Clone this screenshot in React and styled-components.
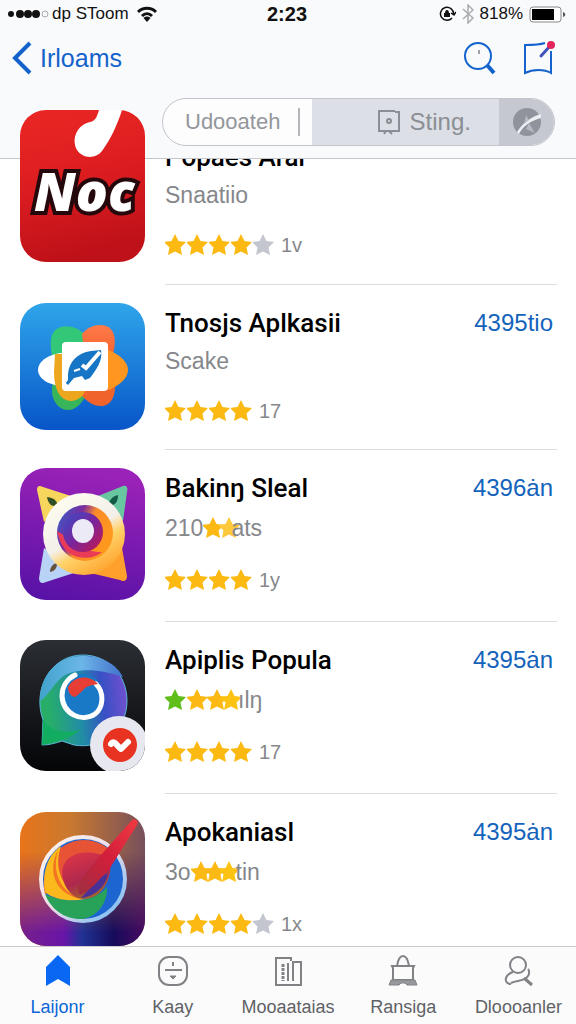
import React, { useState } from "react";
import styled, { createGlobalStyle, css } from "styled-components";

const Global = createGlobalStyle`
  * {
    box-sizing: border-box;
  }
  body {
    margin: 0;
    background: #fff;
    font-family: "Liberation Sans", Arial, sans-serif;
  }
  button {
    padding: 0;
    border: 0;
    background: none;
    font: inherit;
    color: inherit;
    cursor: pointer;
  }
  svg {
    display: block;
    flex: none;
  }
`;

const Page = styled.div`
  display: flex;
  flex-direction: column;
  min-height: 100vh;
`;

const Header = styled.header`
  position: sticky;
  top: 0;
  z-index: 1;
  height: 159px;
  background: #f9fafc;
  border-bottom: 1px solid #c4c5c9;
`;

const StatusBar = styled.div`
  display: grid;
  grid-template-columns: 1fr auto 1fr;
  align-items: center;
  height: 28px;
  padding: 0 10px 0 8px;
  font-size: 17px;
  color: #111;
`;

const StatusGroup = styled.div`
  display: flex;
  align-items: center;
  justify-content: ${(props) => (props.$end ? "flex-end" : "flex-start")};
  gap: ${(props) => (props.$end ? 6 : 2)}px;
`;

const Carrier = styled.span`
  margin-right: 6px;
`;

const Time = styled.span`
  font-size: 20px;
  font-weight: bold;
`;

const NavBar = styled.nav`
  display: flex;
  align-items: center;
  justify-content: space-between;
  height: 60px;
  padding: 0 20px 0 12px;
  color: #1463cc;
`;

const BackButton = styled.button`
  display: flex;
  align-items: center;
  gap: 8px;
  && {
    font-size: 25px;
  }
`;

const NavActions = styled.div`
  display: flex;
  gap: 24px;
`;

const SearchBar = styled.form`
  display: grid;
  grid-template-columns: 150fr 188fr 55fr;
  height: 48px;
  margin: 10px 21px 0 162px;
  overflow: hidden;
  border: 1px solid #c3c5cb;
  border-radius: 24px;
  background: #fdfdfe;
  color: #8b8e94;
  font-size: 24px;
`;

const SearchField = styled.div`
  display: flex;
  align-items: center;
  padding: 0 12px 0 22px;
`;

const SearchInput = styled.input`
  width: 100%;
  height: 28px;
  padding: 0;
  border: 0;
  border-right: 2px solid #b4b6bb;
  outline: none;
  background: none;
  color: #94969b;
  font: inherit;
  font-size: 22px;
`;

const Scope = styled.button`
  display: flex;
  align-items: center;
  justify-content: center;
  gap: 9px;
  && {
    padding-left: 36px;
    background: #dcdfe5;
  }
`;

const ClearButton = styled.button`
  display: flex;
  align-items: center;
  justify-content: center;
  && {
    background: #c5c8d0;
  }
`;

const List = styled.ul`
  flex: 1;
  margin: -67px 0 0;
  padding: 0;
  list-style: none;
`;

const Row = styled.li`
  display: grid;
  grid-template-columns: 125px 1fr;
  column-gap: 20px;
  padding: 0 19px 0 20px;
`;

const AppIcon = styled.div`
  position: relative;
  z-index: ${(props) => (props.$raised ? 2 : 0)};
  height: ${(props) => props.$height}px;
  margin-top: 18px;
  overflow: hidden;
  border-radius: 26px;
`;

const Info = styled.div`
  padding: 18px 0 29px;
  border-bottom: 1px solid #dcdcde;
  ${(props) =>
    props.$compact &&
    css`
      padding-bottom: 26px;
    `}
  ${(props) =>
    props.$under &&
    css`
      padding: 45px 0 27px;
    `}
  ${(props) =>
    props.$last &&
    css`
      padding-bottom: 0;
      border: 0;
    `}
`;

const TitleLine = styled.div`
  display: flex;
  justify-content: space-between;
  height: 40px;
  padding-right: 4px;
  line-height: 40px;
`;

const Title = styled.h2`
  margin: 0;
  color: #000;
  font-family: Roboto, sans-serif;
  font-size: 26px;
  font-weight: 500;
`;

const Price = styled.a`
  color: #1463bb;
  font-size: 24px;
  text-decoration: none;
`;

const Subtitle = styled.div`
  display: flex;
  align-items: center;
  height: ${(props) => (props.$compact ? 36 : 40)}px;
  color: #85878b;
  font-size: 23px;
`;

const Rating = styled.div`
  display: flex;
  align-items: center;
  height: 24px;
  margin-top: 20px;
  color: #85878b;
  font-size: 20px;
`;

const Count = styled.span`
  margin-left: 6px;
`;

const StarBox = styled.span`
  width: ${(props) => props.$width}px;
`;

const TabBar = styled.nav`
  position: sticky;
  bottom: 0;
  z-index: 1;
  display: flex;
  height: 78px;
  border-top: 1px solid #cbcbcd;
  background: #fbfbfc;
`;

const Tab = styled.button`
  display: flex;
  flex: 1 1 0;
  min-width: 0;
  flex-direction: column;
  align-items: center;
  gap: 7px;
  && {
    padding-top: 7px;
    color: ${(props) => (props.$active ? "#0a66d8" : "#606266")};
    font-size: 18px;
    line-height: 24px;
  }
`;

const Star = ({ color = "#fbb911", width = 22 }) => (
  <StarBox $width={width}>
    <svg width="22" height="24" viewBox="0 0 22 24">
      <path
        d="M10 1l3.500 7 7.500 1-5.500 5.500L17 22l-7-3.500L3 22l1.500-7.500L-1 9l7.500-1z"
        fill={color}
      />
    </svg>
  </StarBox>
);

const NocArt = () => (
  <svg width="125" height="152" viewBox="0 0 125 152">
    <defs>
      <linearGradient id="noc" x1="0" y1="0" x2="0.2" y2="1">
        <stop offset="0" stopColor="#ea2724" />
        <stop offset="0.5" stopColor="#dc1d20" />
        <stop offset="1" stopColor="#bf1119" />
      </linearGradient>
    </defs>
    <rect width="125" height="152" fill="url(#noc)" />
    <path
      d="M79 0h23C97 16 90 30 82 41c-7 9-20 7-25-1-6-11 0-25 13-28 6-1 7-6 9-12z"
      fill="#fff"
    />
    <text
      x="14"
      y="101"
      fontFamily="Open Sans, sans-serif"
      fontSize="53"
      fontWeight="800"
      fontStyle="italic"
      fill="#fff"
      stroke="#24080b"
      strokeWidth="8"
      strokeLinejoin="miter"
      paintOrder="stroke"
    >
      Noc
    </text>
  </svg>
);

const FeatherArt = () => (
  <svg width="125" height="127" viewBox="0 0 125 127">
    <defs>
      <linearGradient id="sky" x1="0" y1="0" x2="0" y2="1">
        <stop offset="0" stopColor="#2fa5ea" />
        <stop offset="1" stopColor="#0855c8" />
      </linearGradient>
      <linearGradient id="orange" x1="0" y1="0" x2="0" y2="1">
        <stop offset="0" stopColor="#ff7a4a" />
        <stop offset="1" stopColor="#ef5a22" />
      </linearGradient>
    </defs>
    <rect width="125" height="127" fill="url(#sky)" />
    <path d="M64 31C54 20 33 20 31 36c-1 10 1 20 6 30l27-14z" fill="#33c878" />
    <path d="M33 80c-4 14 4 27 15 27 9 0 15-8 21-20L50 72z" fill="#38b45a" />
    <path d="M62 31c9-11 28-13 32 1 2 9 0 17-4 27L66 66z" fill="url(#orange)" />
    <path d="M94 76c3 13-1 25-11 27-10 1-19-6-25-16l16-20z" fill="#f0642c" />
    <path d="M88 47c9 3 20 11 20 20s-11 17-20 20z" fill="#ff961f" />
    <path d="M44 50c-14 0-26 8-26 17s12 16 26 16z" fill="#fff" />
    <path d="M35 51h12v37h18c-3 8-12 12-19 9-9-4-12-16-12-28z" fill="#eda71e" />
    <rect x="42" y="39" width="46" height="49" rx="4" fill="#fff" />
    <path
      d="M48 71c1-12 9-21 23-23l10-1c2 11-5 20-11 28l-5 2-3-4-8 2-6 6z"
      fill="#1676c5"
    />
    <path d="M62 62l4 3 14-16" fill="none" stroke="#fff" strokeWidth="4" />
    <path d="M47 81l9-12" stroke="#1676c5" strokeWidth="3" />
    <path d="M54 68l6-2" stroke="#fff" strokeWidth="2" />
  </svg>
);

const EyeArt = () => (
  <svg width="125" height="132" viewBox="0 0 125 132">
    <defs>
      <linearGradient id="violet" x1="0.5" y1="0" x2="0.3" y2="1">
        <stop offset="0" stopColor="#9b22b8" />
        <stop offset="1" stopColor="#5912a6" />
      </linearGradient>
      <linearGradient id="shell" x1="0.2" y1="0" x2="0.8" y2="1">
        <stop offset="0" stopColor="#fffdf0" />
        <stop offset="0.5" stopColor="#f3efe9" />
        <stop offset="0.65" stopColor="#ffd268" />
        <stop offset="1" stopColor="#ff9c25" />
      </linearGradient>
      <linearGradient id="iris" x1="0" y1="0" x2="1" y2="0.5">
        <stop offset="0" stopColor="#2667d5" />
        <stop offset="0.4" stopColor="#7c2b9c" />
        <stop offset="0.6" stopColor="#fb8b2b" />
        <stop offset="1" stopColor="#ff991d" />
      </linearGradient>
      <linearGradient id="pupil" x1="0" y1="0" x2="1" y2="1">
        <stop offset="0" stopColor="#3451ca" />
        <stop offset="0.5" stopColor="#7a249c" />
        <stop offset="1" stopColor="#c51848" />
      </linearGradient>
    </defs>
    <rect width="125" height="132" fill="url(#violet)" />
    <path d="M17 22c0-4 2-5 6-3l28 9-27 26z" fill="#f7d65d" />
    <path d="M78 28l25-10c4-1 5 2 4 6l-4 29z" fill="#68c6a0" />
    <path d="M24 80l-5 30c0 5 3 6 7 4l34-11z" fill="#b8d3f5" />
    <path d="M102 80l5 28c0 5-3 6-7 4l-34-8z" fill="#ffa02d" />
    <path d="M27 29c8 1 11 5 10 9-6 1-9-3-10-9z" fill="#314f24" />
    <path d="M98 27c-7 2-9 6-10 11 7 0 10-4 10-11z" fill="#125b46" />
    <path d="M37 95c-5 1-7 5-7 9 5-1 7-4 7-9z" fill="#66503e" />
    <circle cx="64" cy="66" r="41" fill="url(#shell)" />
    <circle cx="65" cy="65" r="28" fill="url(#iris)" />
    <path d="M37 63c3 15 10 23 21 26 10 2 18 0 24-5-10 0-19-2-27-10z" fill="#e93a58" />
    <circle cx="63" cy="64" r="20" fill="url(#pupil)" />
    <ellipse cx="63" cy="63" rx="11" ry="12" fill="#eceaf7" />
  </svg>
);

const BubbleArt = () => (
  <svg width="125" height="132" viewBox="0 0 125 132">
    <defs>
      <linearGradient id="night" x1="0" y1="0" x2="0" y2="1">
        <stop offset="0" stopColor="#2b2e34" />
        <stop offset="1" stopColor="#040507" />
      </linearGradient>
      <linearGradient id="bubble" x1="0.1" y1="0.6" x2="1" y2="0.5">
        <stop offset="0" stopColor="#28ae69" />
        <stop offset="0.4" stopColor="#218ca6" />
        <stop offset="0.7" stopColor="#3750c4" />
        <stop offset="1" stopColor="#7150cf" />
      </linearGradient>
      <linearGradient id="glass" x1="0" y1="0" x2="1" y2="0">
        <stop offset="0" stopColor="#41a3cb" />
        <stop offset="0.5" stopColor="#6bb6e8" />
        <stop offset="1" stopColor="#4270c9" />
      </linearGradient>
    </defs>
    <rect width="125" height="132" fill="url(#night)" />
    <path
      d="M63 15c25 0 44 20 44 46 0 28-24 49-53 44l-12-4c-6 2-13 4-20 4l1-25c-11-31 8-65 40-65z"
      fill="url(#bubble)"
      stroke="#5db6dc"
      strokeWidth="1"
    />
    <path d="M20 61c0-27 18-45 43-45 20 0 34 9 40 21C78 28 54 28 42 37c-10 9-14 19-22 24z" fill="url(#glass)" />
    <path d="M22 105l1-26c7 12 20 15 38 11-12 8-25 13-39 15z" fill="#12ad60" />
    <circle cx="62" cy="55" r="21" fill="#1979c7" />
    <path
      d="M76 44c9 9 7 24-1 30-13 9-32 0-33-18 0-9 5-17 13-21"
      fill="none"
      stroke="#fff"
      strokeWidth="5"
      strokeLinecap="round"
    />
    <path d="M48 47c7-12 22-12 30-3-8 1-12 3-14 5-4 4-6 6-9 8-5-1-7-5-7-10z" fill="#e63e35" />
    <circle cx="99" cy="105" r="29" fill="#e6e7ef" />
    <circle cx="100" cy="105" r="17" fill="#e83322" />
    <path
      d="M91 104c3-5 6 2 10 5l7-7"
      fill="none"
      stroke="#fff"
      strokeWidth="6"
      strokeLinecap="round"
      strokeLinejoin="round"
    />
  </svg>
);

const PaletteArt = () => (
  <svg width="125" height="134" viewBox="0 0 125 134">
    <defs>
      <linearGradient id="dusk" x1="0" y1="0" x2="1" y2="0">
        <stop offset="0" stopColor="#e8741a" />
        <stop offset="0.4" stopColor="#c9792f" />
        <stop offset="1" stopColor="#76505d" />
      </linearGradient>
      <linearGradient id="deep" x1="0" y1="0" x2="1" y2="0">
        <stop offset="0" stopColor="#75208b" />
        <stop offset="0.35" stopColor="#6915a8" />
        <stop offset="0.5" stopColor="#203293" />
        <stop offset="0.75" stopColor="#160b5b" />
        <stop offset="1" stopColor="#470960" />
      </linearGradient>
      <linearGradient id="fade" x1="0" y1="0" x2="0" y2="1">
        <stop offset="0.3" stopColor="#000" />
        <stop offset="0.9" stopColor="#fff" />
      </linearGradient>
      <mask id="lower">
        <rect width="125" height="134" fill="url(#fade)" />
      </mask>
      <linearGradient id="ring" x1="0" y1="0" x2="1" y2="1">
        <stop offset="0" stopColor="#fff5ec" />
        <stop offset="0.5" stopColor="#eadde8" />
        <stop offset="1" stopColor="#6ab8f5" />
      </linearGradient>
      <linearGradient id="heart" x1="0.2" y1="0" x2="0.6" y2="1">
        <stop offset="0" stopColor="#dc3547" />
        <stop offset="0.6" stopColor="#ae284e" />
        <stop offset="1" stopColor="#a36a26" />
      </linearGradient>
      <linearGradient id="brush" x1="1" y1="0" x2="0" y2="1">
        <stop offset="0" stopColor="#f03a41" />
        <stop offset="0.5" stopColor="#d31e3c" />
        <stop offset="1" stopColor="#9e3040" />
      </linearGradient>
    </defs>
    <rect width="125" height="134" fill="url(#dusk)" />
    <rect width="125" height="134" fill="url(#deep)" mask="url(#lower)" />
    <circle cx="63" cy="67" r="42" fill="#1d66d2" stroke="url(#ring)" strokeWidth="4" />
    <path d="M25 82c-6-26 11-53 38-54 16 0 25 7 31 15L62 67z" fill="#e65335" />
    <path d="M25 82c12 6 28 8 42 5 8-2 15-6 20-12 1 14-8 29-24 32-17 1-32-9-38-25z" fill="#27a258" />
    <path d="M25 80c-3-21 3-37 16-46-8 24 2 44 24 53-14 3-31 1-40-7z" fill="#fcb91d" />
    <path d="M38 38c-7 24 4 44 25 49-26-3-37-26-25-49z" fill="#f47423" />
    <path d="M45 73c-9-21 5-35 28-32l17 3c3 15-3 42-26 43-9 0-15-6-19-14z" fill="url(#heart)" />
    <path d="M61 86c9-1 24-7 27-25l-9 5z" fill="#493196" />
    <path d="M112 8c4-2 7 1 5 5L90 56C79 68 69 80 60 83c-4-6 0-14 6-22 5-6 9-11 15-18z" fill="url(#brush)" />
  </svg>
);

const apps = [
  {
    title: "Popaes Arar",
    subtitle: ["Snaatiio"],
    rating: 4,
    gray: true,
    count: "1v",
    height: 152,
    under: true,
    compact: true,
    Art: NocArt,
  },
  {
    title: "Tnosjs Aplkasii",
    subtitle: ["Scake"],
    price: "4395tio",
    rating: 4,
    count: "17",
    height: 127,
    compact: true,
    Art: FeatherArt,
  },
  {
    title: "Bakinŋ Sleal",
    subtitle: ["210", ["#fdb913", 16], ["#fdc93c", 12], "ats"],
    price: "4396ȧn",
    rating: 4,
    count: "1y",
    height: 132,
    Art: EyeArt,
  },
  {
    title: "Apiplis Popula",
    subtitle: [["#5fbe18", 22], ["#fdb913", 20], ["#fdb913", 14], ["#fdc313", 17], "ılŋ"],
    price: "4395ȧn",
    rating: 4,
    count: "17",
    height: 131,
    Art: BubbleArt,
  },
  {
    title: "Apokaniasl",
    subtitle: ["3o", ["#fdb913", 14], ["#fdb913", 14], ["#fdc313", 17], "tin"],
    price: "4395ȧn",
    rating: 4,
    gray: true,
    count: "1x",
    height: 134,
    last: true,
    Art: PaletteArt,
  },
];

const AppRow = ({ app }) => {
  const { Art } = app;
  return (
    <Row>
      <AppIcon $height={app.height} $raised={app.under}>
        <Art />
      </AppIcon>
      <Info $compact={app.compact} $under={app.under} $last={app.last}>
        <TitleLine>
          <Title>{app.title}</Title>
          {app.price && <Price href="#app">{app.price}</Price>}
        </TitleLine>
        <Subtitle $compact={app.compact}>
          {app.subtitle.map((part, i) =>
            typeof part === "string" ? (
              <span key={i}>{part}</span>
            ) : (
              <Star key={i} color={part[0]} width={part[1]} />
            )
          )}
        </Subtitle>
        <Rating>
          {Array.from({ length: app.rating }, (_, i) => (
            <Star key={i} />
          ))}
          {app.gray && <Star color="#c3c6cf" />}
          <Count>{app.count}</Count>
        </Rating>
      </Info>
    </Row>
  );
};

const tabs = [
  {
    label: "Laijonr",
    icon: <path d="M16 1l12 12v19l-12-7-12 7V13z" fill="#0868f4" />,
  },
  {
    label: "Kaay",
    icon: (
      <g fill="none" stroke="#808286" strokeWidth="2">
        <rect x="2" y="3" width="28" height="28" rx="10" />
        <path d="M8 16h17M16 8v4" />
        <path d="M13 22l3 3 3-3z" fill="#808286" strokeWidth="1" />
      </g>
    ),
  },
  {
    label: "Mooaataias",
    icon: (
      <g fill="none" stroke="#808286" strokeWidth="2">
        <path d="M19 4H4v27h25V8h-8v19M19 3v4M16 9v18" />
        <path d="M11 10v17" strokeWidth="3" strokeDasharray="3 1" />
      </g>
    ),
  },
  {
    label: "Ransiga",
    icon: (
      <g fill="none" stroke="#808286" strokeWidth="2">
        <path d="M10 12c1-6 3-10 6-10s5 4 6 10M5 12h22l-1 2v12H6V14z" />
        <path d="M4 26h24l2 5H20l-2-2h-4l-2 2H2z" fill="#96989c" strokeWidth="1" />
      </g>
    ),
  },
  {
    label: "Dloooanler",
    icon: (
      <g fill="none" stroke="#808286" strokeWidth="2">
        <circle cx="16" cy="11" r="8" />
        <path d="M11 18c-6 2-8 6-7 9 1 3 3 3 5 3M9 29c6-3 13-1 17-7 2-3 1-6 0-7" />
        <path d="M22 24l8 7" strokeWidth="3" />
      </g>
    ),
  },
];

const App = () => {
  const [query, setQuery] = useState("Udooateh");
  const [active, setActive] = useState(0);

  return (
    <Page>
      <Global />
      <Header>
        <StatusBar>
          <StatusGroup>
            <svg width="42" height="12" viewBox="0 0 42 12">
              <g fill="#111">
                <circle cx="3" cy="6" r="3" />
                <circle cx="12" cy="6" r="4" />
                <circle cx="20" cy="6" r="4" />
                <circle cx="28" cy="6" r="4" />
              </g>
              <circle cx="37" cy="6" r="3" fill="none" stroke="#aaa" />
            </svg>
            <Carrier>dp SToom</Carrier>
            <svg width="20" height="16" viewBox="0 0 20 16">
              <g fill="none" stroke="#111" strokeWidth="3">
                <path d="M1 6c5-5 13-5 18 0M5 10c3-3 7-3 10 0" />
              </g>
              <path d="M6.500 12c2-2 5-2 7 0L10 16z" fill="#111" />
            </svg>
          </StatusGroup>
          <Time>2:23</Time>
          <StatusGroup $end>
            <svg width="17" height="16" viewBox="0 0 17 16">
              <path
                d="M13 12a6.500 6.500 0 1 1 1.500-4M12 7l3 2 2-3"
                fill="none"
                stroke="#111"
                strokeWidth="1.5"
              />
              <path d="M5 7h6v4H5zM6 7c0-4 4-4 4 0" fill="#111" />
            </svg>
            <svg width="12" height="20" viewBox="0 0 12 20">
              <path d="M1 5l10 9-5 5V1l5 5-10 9" fill="none" stroke="#aaacb0" strokeWidth="1.5" />
            </svg>
            <span>818%</span>
            <svg width="37" height="17" viewBox="0 0 37 17">
              <rect x="1" y="1" width="31" height="15" rx="3" fill="#fff" stroke="#888" />
              <rect x="3" y="3" width="22" height="11" fill="#000" />
              <path d="M34 6c3 1 3 4 0 5z" fill="#555" />
            </svg>
          </StatusGroup>
        </StatusBar>
        <NavBar>
          <BackButton type="button">
            <svg width="20" height="34" viewBox="0 0 20 34">
              <path d="M18 2L3 17l15 15" fill="none" stroke="#1463cc" strokeWidth="4" />
            </svg>
            Irloams
          </BackButton>
          <NavActions>
            <button type="button" aria-label="Search">
              <svg width="36" height="34" viewBox="0 0 36 34">
                <g fill="none" stroke="#1463cc">
                  <circle cx="16" cy="15" r="13" strokeWidth="2" />
                  <path d="M25 24l7 8" strokeWidth="4" />
                  <path d="M17 9v4" stroke="#445" />
                </g>
              </svg>
            </button>
            <button type="button" aria-label="Compose">
              <svg width="34" height="34" viewBox="0 0 34 34">
                <path
                  d="M23 2c-6 2-12 2-20 2v28c8-4 19-4 26 0V10"
                  fill="none"
                  stroke="#1463cc"
                  strokeWidth="2"
                />
                <path d="M19 15L28 5" stroke="#3f54b8" strokeWidth="3" strokeLinecap="round" />
                <circle cx="29" cy="4" r="4" fill="#e0265d" />
              </svg>
            </button>
          </NavActions>
        </NavBar>
        <SearchBar onSubmit={(e) => e.preventDefault()}>
          <SearchField>
            <SearchInput
              aria-label="Search apps"
              value={query}
              onChange={(e) => setQuery(e.target.value)}
            />
          </SearchField>
          <Scope type="button">
            <svg width="24" height="26" viewBox="0 0 24 26">
              <g fill="none" stroke="#8b8e94" strokeWidth="2">
                <path d="M18 2H2v20h20V3h-4M9 22l-2 3M12 22l3 3" />
                <circle cx="12" cy="12" r="2" />
              </g>
            </svg>
            Sting.
          </Scope>
          <ClearButton type="button" aria-label="Clear">
            <svg width="28" height="28" viewBox="0 0 28 28">
              <circle cx="14" cy="14" r="14" fill="#90939b" />
              <path d="M28 6C17 9 9 16 4 24l2 2c4-8 11-13 22-16z" fill="#eceef2" />
              <path d="M13 7l3 5-5 4zM16 15l6 10-9-4z" fill="#b6b9c1" />
            </svg>
          </ClearButton>
        </SearchBar>
      </Header>
      <List>
        {apps.map((app) => (
          <AppRow key={app.title} app={app} />
        ))}
      </List>
      <TabBar>
        {tabs.map((tab, i) => (
          <Tab
            key={tab.label}
            type="button"
            $active={i === active}
            onClick={() => setActive(i)}
          >
            <svg width="32" height="34" viewBox="0 0 32 34">
              {tab.icon}
            </svg>
            {tab.label}
          </Tab>
        ))}
      </TabBar>
    </Page>
  );
};

export default App;
